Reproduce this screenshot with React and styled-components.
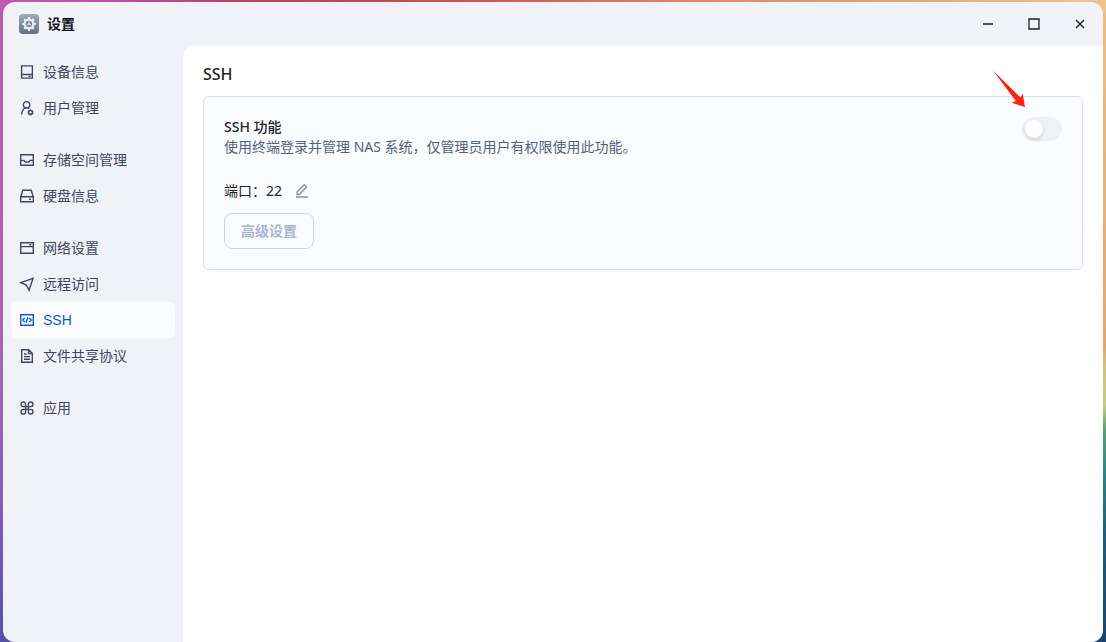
import { useState } from "react";
import styled, { createGlobalStyle, css } from "styled-components";

const GlobalStyle = createGlobalStyle`
  * {
    box-sizing: border-box;
  }

  body {
    margin: 0;
    font-family: "Noto Sans", "Noto Sans CJK SC", sans-serif;
    font-size: 14px;
    line-height: 20px;
    color: #1f2329;
  }

  button {
    font: inherit;
    cursor: pointer;
  }
`;

const Desktop = styled.div`
  display: flex;
  min-height: 100vh;
  padding: 2px 3px 0;
  background:
    linear-gradient(90deg, #c25aae, #b8509a 12%, #b84468 20%, #c04658 32%, #cc5a58 45%, #dd8068 60%, #e2a070 78%, #eec48c) top / 100% 12px no-repeat,
    linear-gradient(#c05aa8, #b45cb0 40%, #a464ba 60%, #7a5cb4 82%, #5650a6) left / 50% 100% no-repeat,
    linear-gradient(#edbf85, #dfa870 54%, #d6c080 57%, #c8cc84 63%, #58a078 67%, #2c8484 74%, #1f5c78 84%, #1d446e) right / 50% 100% no-repeat;
`;

const Window = styled.div`
  flex: 1;
  display: flex;
  flex-direction: column;
  overflow: hidden;
  border-radius: 12px;
  background: #f1f2f8;
`;

const TitleBar = styled.header`
  display: flex;
  align-items: center;
  justify-content: space-between;
  height: 44px;
  padding-left: 16px;
`;

const AppName = styled.div`
  display: flex;
  align-items: center;
  gap: 8px;
  font-weight: 700;
  color: #14161f;
`;

const WindowButtons = styled.div`
  display: flex;
`;

const WindowButton = styled.button`
  display: grid;
  place-items: center;
  width: 46px;
  height: 44px;
  padding: 0;
  border: 0;
  background: transparent;
  color: #1c1e2b;
`;

const Body = styled.div`
  flex: 1;
  display: flex;
`;

const Sidebar = styled.nav`
  display: flex;
  flex-direction: column;
  gap: 16px;
  width: 180px;
  padding: 8px;
`;

const NavGroup = styled.ul`
  margin: 0;
  padding: 0;
  list-style: none;
`;

const NavLink = styled.a`
  display: flex;
  align-items: center;
  gap: 8px;
  height: 36px;
  padding: 0 8px;
  border-radius: 6px;
  font-family: "Liberation Sans", "Noto Sans CJK SC", sans-serif;
  text-decoration: none;
  color: #41455f;

  ${({ $active }) =>
    $active &&
    css`
      background: #fbfcff;
      color: #1558c0;
    `}
`;

const Main = styled.main`
  flex: 1;
  padding: 16px 20px;
  border-top-left-radius: 12px;
  background: #fff;
`;

const Heading = styled.h1`
  margin: 0 0 10px;
  font-size: 16px;
  line-height: 24px;
  font-weight: 500;
`;

const Card = styled.section`
  padding: 20px;
  border: 1px solid #dcdfea;
  border-radius: 6px;
  background: #fbfcff;
`;

const CardHead = styled.div`
  display: flex;
  align-items: flex-start;
  justify-content: space-between;
`;

const CardTitle = styled.h2`
  margin: 0;
  font-size: 14px;
  line-height: 20px;
  font-weight: 500;
`;

const Description = styled.p`
  margin: 0;
  color: #56607a;
`;

const PortRow = styled.div`
  display: flex;
  align-items: center;
  gap: 12px;
  margin: 24px 0 12px;
`;

const IconButton = styled.button`
  display: grid;
  place-items: center;
  padding: 0;
  border: 0;
  background: transparent;
  color: #8b8c90;
`;

const OutlineButton = styled.button`
  height: 36px;
  padding: 0 16px;
  border: 1px solid #c9d5e4;
  border-radius: 8px;
  background: transparent;
  font-weight: 700;
  color: #a9b8cd;
`;

const Switch = styled.input`
  appearance: none;
  display: flex;
  align-items: center;
  width: 40px;
  height: 24px;
  margin: 0;
  padding: 3px;
  border-radius: 12px;
  background: #f0f1f5;
  cursor: pointer;

  &::before {
    content: "";
    width: 18px;
    height: 18px;
    border-radius: 50%;
    background: #fff;
    box-shadow: 0 2px 4px rgba(0, 0, 0, 0.14);
  }

  &:checked {
    justify-content: flex-end;
    background: #1558c0;
  }
`;

const SwitchBox = styled.div`
  position: relative;
`;

const Arrow = styled.svg`
  position: absolute;
  top: -47px;
  right: 36px;
  pointer-events: none;
`;

const Glyph = ({ children }) => (
  <svg width="16" height="16" viewBox="0 0 16 16" fill="none" stroke="currentColor" strokeWidth="1.4" aria-hidden="true">
    {children}
  </svg>
);

const icons = {
  device: (
    <Glyph>
      <path d="M2.6 1.9h10.8v12.2H2.6zM2.6 10.5h10.8M9.6 12.4h2" />
    </Glyph>
  ),
  user: (
    <Glyph>
      <circle cx="7.6" cy="4.8" r="3.2" />
      <path d="M6.4 7.8C4.1 9 2.7 11.200 2.700 14.500" />
      <path d="M8.800 7.700l1.400 1" />
      <path d="M11.500 10.100l2 1.200v2.200l-2 1.200-2-1.200v-2.200z" strokeWidth="1.6" />
    </Glyph>
  ),
  storage: (
    <Glyph>
      <path d="M1.7 2.7h12.600v10.600H1.700zM1.700 8.400H5c.5 1.200 1.600 1.900 3 1.900s2.500-.7 3-1.900h3.300" />
    </Glyph>
  ),
  disk: (
    <Glyph>
      <path d="M1.7 8.700h12.600v5.100H1.700zM1.900 8.700L3.700 2.200h8.600l1.800 6.500M10 11.300h2" />
    </Glyph>
  ),
  network: (
    <Glyph>
      <path d="M1.7 2.700h12.600v10.600H1.700zM1.700 6.600h12.600M10.300 4.700h2" />
    </Glyph>
  ),
  remote: (
    <Glyph>
      <path d="M1.800 6.700L14 2.300l-3.900 11.900-2.700-5.100z" />
    </Glyph>
  ),
  ssh: (
    <Glyph>
      <path d="M1.7 2.700h12.600v10.600H1.700zM5.700 5.900L3.700 8l2 2.100M10.300 5.900l2 2.100-2 2.100M8.900 5.200l-1.800 5.600" />
    </Glyph>
  ),
  file: (
    <Glyph>
      <path d="M2.700 1.700h7l3.600 3.600v9H2.700zM9.500 2v3.500H13M5 6h2.500M5 8.600h6M5 11.200h6" />
    </Glyph>
  ),
  apps: (
    <Glyph>
      <path d="M6.600 6.600H4.300A2.300 2.300 0 1 1 6.600 4.300v7.400A2.300 2.300 0 1 1 4.300 9.400h7.400a2.300 2.300 0 1 1-2.300 2.300V4.300a2.300 2.300 0 1 1 2.300 2.300z" />
    </Glyph>
  ),
};

const navGroups = [
  [
    { id: "device", label: "设备信息" },
    { id: "user", label: "用户管理" },
  ],
  [
    { id: "storage", label: "存储空间管理" },
    { id: "disk", label: "硬盘信息" },
  ],
  [
    { id: "network", label: "网络设置" },
    { id: "remote", label: "远程访问" },
    { id: "ssh", label: "SSH" },
    { id: "file", label: "文件共享协议" },
  ],
  [{ id: "apps", label: "应用" }],
];

const teeth = [0, 45, 90, 135, 180, 225, 270, 315];

const SettingsLogo = () => (
  <svg width="20" height="20" viewBox="0 0 20 20" aria-hidden="true">
    <defs>
      <linearGradient id="logo-bg" x1="0" y1="0" x2="0" y2="1">
        <stop offset="0" stopColor="#9aabc0" />
        <stop offset="1" stopColor="#647080" />
      </linearGradient>
    </defs>
    <rect width="20" height="20" rx="4" fill="url(#logo-bg)" />
    <g fill="#eef1f5">
      {teeth.map((angle) => (
        <path key={angle} d="M8.500 5.500l.7-2.400h1.600l.7 2.400z" transform={`rotate(${angle} 10 10)`} />
      ))}
    </g>
    <circle cx="10" cy="10" r="4.300" fill="#7c8898" stroke="#eef1f5" strokeWidth="2" />
    <path d="M10 7.300v2.700l-2.400 1.500M10 10l2.400 1.500" fill="none" stroke="#d8dee6" />
    <circle cx="10" cy="10" r="1.200" fill="#d8dee6" />
  </svg>
);

const App = () => {
  const [enabled, setEnabled] = useState(false);
  const [current, setCurrent] = useState("ssh");

  return (
    <>
      <GlobalStyle />
      <Desktop>
        <Window>
          <TitleBar>
            <AppName>
              <SettingsLogo />
              设置
            </AppName>
            <WindowButtons>
              <WindowButton aria-label="最小化">
                <svg width="12" height="12" stroke="currentColor" strokeWidth="1.3">
                  <path d="M1 6h10" />
                </svg>
              </WindowButton>
              <WindowButton aria-label="最大化">
                <svg width="12" height="12" fill="none" stroke="currentColor" strokeWidth="1.3">
                  <path d="M1 1h10v10H1z" />
                </svg>
              </WindowButton>
              <WindowButton aria-label="关闭">
                <svg width="12" height="12" stroke="currentColor" strokeWidth="1.4">
                  <path d="M2 2l8 8M10 2l-8 8" />
                </svg>
              </WindowButton>
            </WindowButtons>
          </TitleBar>
          <Body>
            <Sidebar>
              {navGroups.map((group) => (
                <NavGroup key={group[0].id}>
                  {group.map(({ id, label }) => (
                    <li key={id}>
                      <NavLink href={`#${id}`} $active={id === current} onClick={() => setCurrent(id)}>
                        {icons[id]}
                        {label}
                      </NavLink>
                    </li>
                  ))}
                </NavGroup>
              ))}
            </Sidebar>
            <Main>
              <Heading>SSH</Heading>
              <Card>
                <CardHead>
                  <div>
                    <CardTitle id="ssh-title">SSH 功能</CardTitle>
                    <Description>使用终端登录并管理 NAS 系统，仅管理员用户有权限使用此功能。</Description>
                  </div>
                  <SwitchBox>
                    <Switch
                      type="checkbox"
                      role="switch"
                      aria-labelledby="ssh-title"
                      checked={enabled}
                      onChange={(e) => setEnabled(e.target.checked)}
                    />
                    <Arrow width="34" height="38" viewBox="0 0 34 38" aria-hidden="true">
                      <path d="M1 0.500L28.500 27.500 30.700 23.700 33 37 19.500 32.700 23.800 31z" fill="#fb2412" />
                    </Arrow>
                  </SwitchBox>
                </CardHead>
                <PortRow>
                  <span>端口：22</span>
                  <IconButton aria-label="编辑端口">
                    <svg width="16" height="16" fill="none" stroke="currentColor" strokeWidth="1.3">
                      <path d="M2 14h12" strokeWidth="1.6" />
                      <path d="M3 11.500V9l7.300-7.300 2.300 2.300L5.300 11.500z" />
                    </svg>
                  </IconButton>
                </PortRow>
                <OutlineButton>高级设置</OutlineButton>
              </Card>
            </Main>
          </Body>
        </Window>
      </Desktop>
    </>
  );
};

export default App;
